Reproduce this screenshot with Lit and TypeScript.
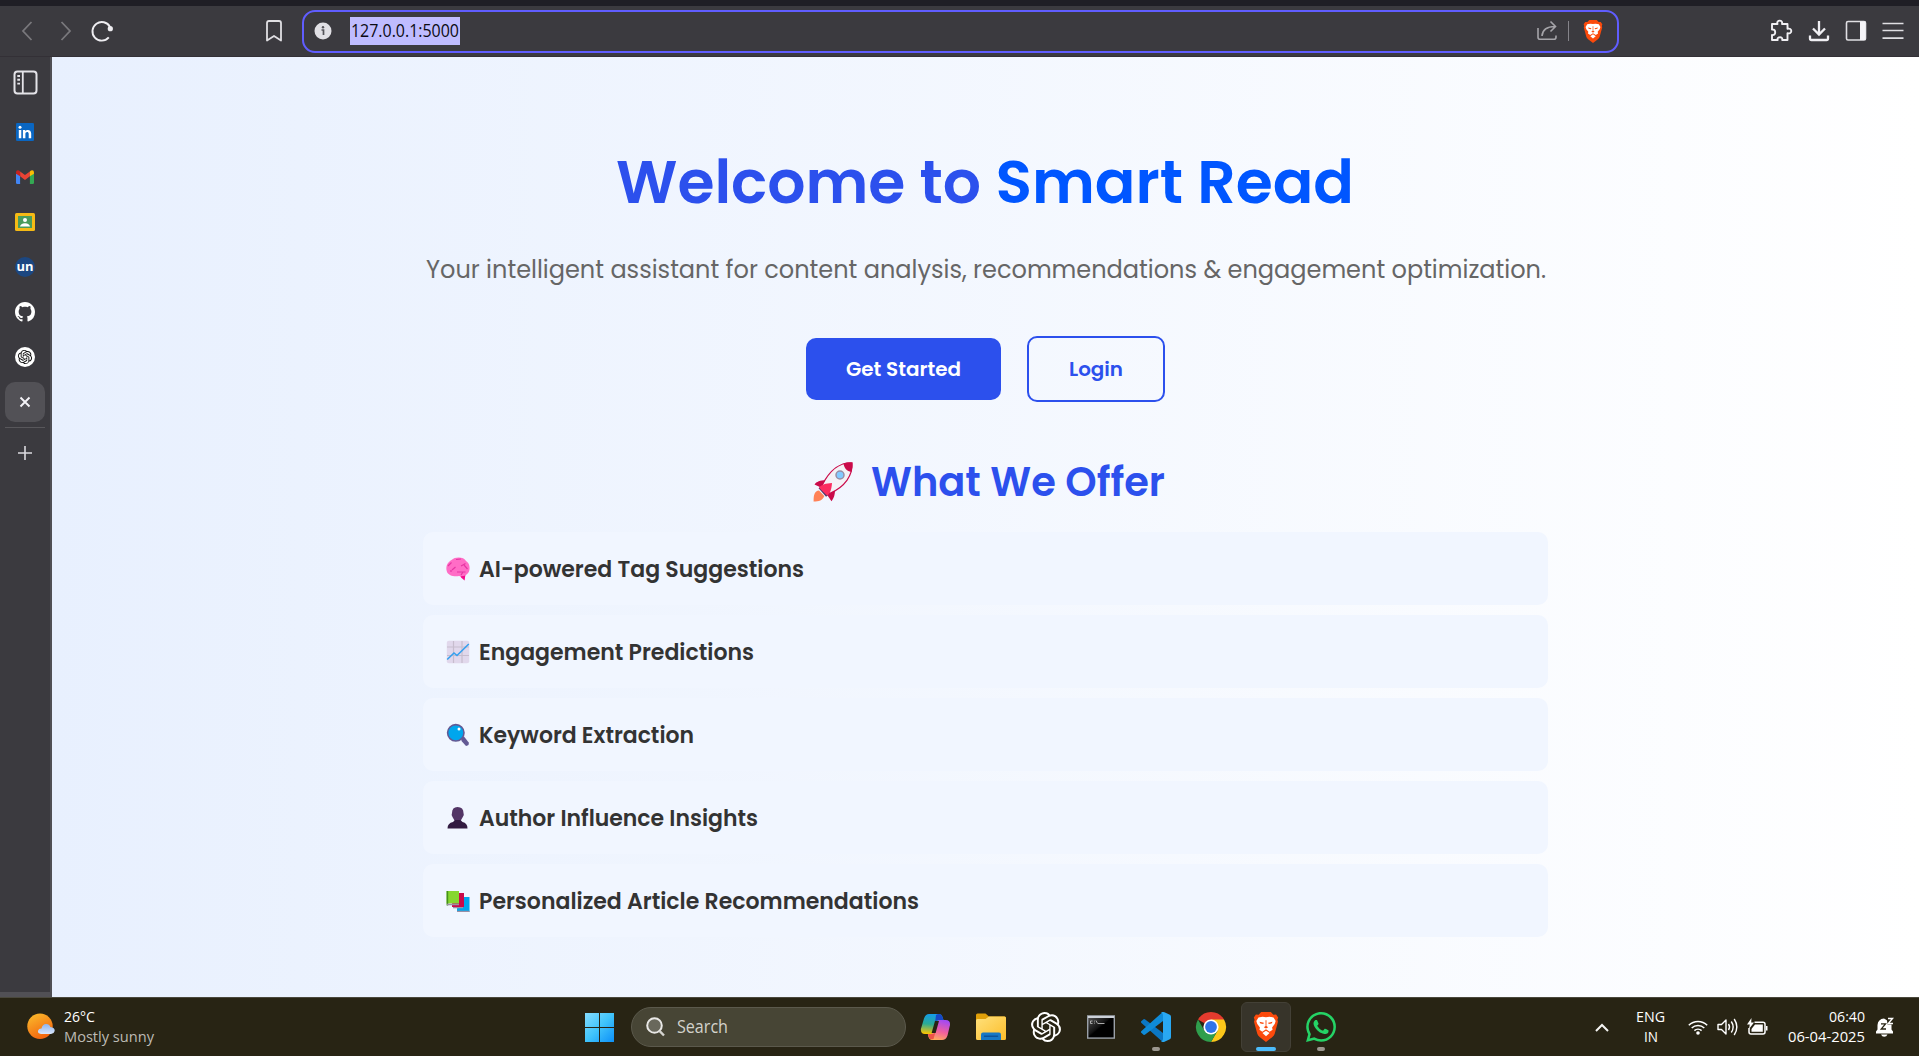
import { LitElement, html, svg, css } from "lit";
import { customElement } from "lit/decorators.js";

/** One line of text set to an exact advance width. */
const line = (text: unknown, width: number, height: number, baseline: number, cls: string) => html`
  <svg class="line ${cls}" width=${width} height=${height}>
    <text x="0" y=${baseline} textLength=${width} lengthAdjust="spacingAndGlyphs">${text}</text>
  </svg>`;

const icon = (w: number, h: number, box: string, body: unknown) => html`
  <svg class="icon" width=${w} height=${h} viewBox=${box} fill="none">${body}</svg>`;

const OPENAI = "M22.2819 9.8211a5.9847 5.9847 0 0 0-.5157-4.9108 6.0462 6.0462 0 0 0-6.5098-2.9A6.0651 6.0651 0 0 0 4.9807 4.1818a5.9847 5.9847 0 0 0-3.9977 2.9 6.0462 6.0462 0 0 0 .7427 7.0966 5.98 5.98 0 0 0 .511 4.9107 6.051 6.051 0 0 0 6.5146 2.9001A5.9847 5.9847 0 0 0 13.2599 24a6.0557 6.0557 0 0 0 5.7718-4.2058 5.9894 5.9894 0 0 0 3.9977-2.9001 6.0557 6.0557 0 0 0-.7475-7.0729zm-9.022 12.6081a4.4755 4.4755 0 0 1-2.8764-1.0408l.1419-.0804 4.7783-2.7582a.7948.7948 0 0 0 .3927-.6813v-6.7369l2.02 1.1686a.071.071 0 0 1 .038.052v5.5826a4.504 4.504 0 0 1-4.4945 4.4944zm-9.6607-4.1254a4.4708 4.4708 0 0 1-.5346-3.0137l.142.0852 4.783 2.7582a.7712.7712 0 0 0 .7806 0l5.8428-3.3685v2.3324a.0804.0804 0 0 1-.0332.0615L9.74 19.9502a4.4992 4.4992 0 0 1-6.1408-1.6464zM2.3408 7.8956a4.485 4.485 0 0 1 2.3655-1.9728V11.6a.7664.7664 0 0 0 .3879.6765l5.8144 3.3543-2.0201 1.1685a.0757.0757 0 0 1-.071 0l-4.8303-2.7865A4.504 4.504 0 0 1 2.3408 7.872zm16.5963 3.8558L13.1038 8.364 15.1192 7.2a.0757.0757 0 0 1 .071 0l4.8303 2.7913a4.4944 4.4944 0 0 1-.6765 8.1042v-5.6772a.79.79 0 0 0-.407-.667zm2.0107-3.0231l-.142-.0852-4.7735-2.7818a.7759.7759 0 0 0-.7854 0L9.409 9.2297V6.8974a.0662.0662 0 0 1 .0284-.0615l4.8303-2.7866a4.4992 4.4992 0 0 1 6.6802 4.66zM8.3065 12.863l-2.02-1.1638a.0804.0804 0 0 1-.038-.0567V6.0742a4.4992 4.4992 0 0 1 7.3757-3.4537l-.142.0805L8.704 5.459a.7948.7948 0 0 0-.3927.6813zm1.0976-2.3654l2.602-1.4998 2.6069 1.4998v2.9994l-2.5974 1.4997-2.6067-1.4997Z";
const GITHUB = "M8 0C3.58 0 0 3.58 0 8c0 3.54 2.29 6.53 5.47 7.59.4.07.55-.17.55-.38 0-.19-.01-.82-.01-1.49-2.01.37-2.53-.49-2.69-.94-.09-.23-.48-.94-.82-1.13-.28-.15-.68-.52-.01-.53.63-.01 1.08.58 1.23.82.72 1.21 1.87.87 2.33.66.07-.52.28-.87.51-1.07-1.78-.2-3.64-.89-3.64-3.95 0-.87.31-1.59.82-2.15-.08-.2-.36-1.02.08-2.12 0 0 .67-.21 2.2.82.64-.18 1.32-.27 2-.27s1.36.09 2 .27c1.53-1.04 2.2-.82 2.2-.82.44 1.1.16 1.92.08 2.12.51.56.82 1.27.82 2.15 0 3.07-1.87 3.75-3.65 3.95.29.25.54.73.54 1.48 0 1.07-.01 1.93-.01 2.2 0 .21.15.46.55.38A8.01 8.01 0 0 0 16 8c0-4.42-3.58-8-8-8z";
const WHATSAPP = "M17.472 14.382c-.297-.149-1.758-.867-2.03-.967-.273-.099-.471-.148-.67.15-.197.297-.767.966-.94 1.164-.173.199-.347.223-.644.075-.297-.15-1.255-.463-2.39-1.475-.883-.788-1.48-1.761-1.653-2.059-.173-.297-.018-.458.13-.606.134-.133.298-.347.446-.52.149-.174.198-.298.298-.497.099-.198.05-.371-.025-.52-.075-.149-.669-1.612-.916-2.207-.242-.579-.487-.5-.669-.51-.173-.008-.371-.01-.57-.01-.198 0-.52.074-.792.372-.272.297-1.04 1.016-1.04 2.479 0 1.462 1.065 2.875 1.213 3.074.149.198 2.096 3.2 5.077 4.487.709.306 1.262.489 1.694.625.712.227 1.36.195 1.871.118.571-.085 1.758-.719 2.006-1.413.248-.694.248-1.289.173-1.413-.074-.124-.272-.198-.57-.347m-5.421 7.403h-.004a9.87 9.87 0 01-5.031-1.378l-.361-.214-3.741.982.998-3.648-.235-.374a9.86 9.86 0 01-1.51-5.26c.001-5.45 4.436-9.884 9.888-9.884 2.64 0 5.122 1.03 6.988 2.898a9.825 9.825 0 012.893 6.994c-.003 5.45-4.437 9.884-9.885 9.884m8.413-18.297A11.815 11.815 0 0012.05 0C5.495 0 .16 5.335.157 11.892c0 2.096.547 4.142 1.588 5.945L.057 24l6.305-1.654a11.882 11.882 0 005.683 1.448h.005c6.554 0 11.89-5.335 11.893-11.893a11.821 11.821 0 00-3.48-8.413Z";

/* Lion shield on a 26x31 box. */
const brave = (w: number, h: number) => icon(w, h, "0 0 26 31", svg`
  <path d="M8 0H18L20.6 2.8 23.4 2.6 25.6 5.6 24.8 8 25.4 10 22 22.6Q21.4 24.6 19.6 25.9L13 31 6.4 25.9Q4.600 24.600 4 22.600L.6 10 1.200 8 .4 5.600 2.600 2.600 5.400 2.800Z" fill="#fb4a0c"/>
  <path d="M13 5.500 16.600 4.900 20.800 5.800 23 9.300 22 12.500 19.300 15.900 19.800 18.300 16.800 20.300 13 17.900 9.200 20.300 6.200 18.300 6.700 15.900 4 12.500 3 9.300 5.200 5.800 9.400 4.900Z" fill="#fff"/>
  <path d="M13 19.300 16.700 21.800 13 25 9.300 21.800Z" fill="#fff"/>
  <path d="M6.200 10.200 10.800 11 10.200 12.400 7.200 11.900ZM19.800 10.200 15.200 11 15.800 12.400 18.800 11.900ZM12.500 8.500H13.500L13.400 14.500 15.300 15.800 13 17 10.700 15.800 12.600 14.500Z" fill="#fb4a0c"/>`);

const I = {
  back: icon(12, 22, "0 0 12 22", svg`<path d="M10.500 2 2 11 10.500 20" stroke="#79787c" stroke-width="1.800"/>`),
  forward: icon(12, 22, "0 0 12 22", svg`<path d="M1.500 2 10 11 1.500 20" stroke="#79787c" stroke-width="1.800"/>`),
  reload: icon(24, 24, "0 0 24 24", svg`<path d="M18.800 18.400A9.300 9.300 0 1 1 20 8" stroke="#eeedf1" stroke-width="1.900"/><circle cx="20.300" cy="9.700" r="2.600" fill="#eeedf1"/>`),
  bookmark: icon(18, 24, "0 0 18 24", svg`<path d="M2 4Q2 2 4 2H14Q16 2 16 4V21.500L9 17 2 21.500Z" stroke="#e0dfe3" stroke-width="1.800" stroke-linejoin="round"/>`),
  info: icon(18, 18, "0 0 18 18", svg`<circle cx="9" cy="9" r="8.500" fill="#e1e0e5"/><path d="M7.500 8H9.500V13" stroke="#55545a" stroke-width="1.700"/><circle cx="9" cy="5.200" r="1.200" fill="#55545a"/>`),
  share: icon(22, 22, "0 0 22 22", svg`<path d="M2 8V17.300Q2 19.300 4 19.300H18Q20 19.300 20 17.300V15.500M6 16C6.500 9.500 10.500 6.500 19 6.500M14.500 1.500 19.500 6.500 14.500 11.500" stroke="#a5a4a9" stroke-width="1.600"/>`),
  puzzle: icon(24, 24, "0 0 24 24", svg`<path d="M3 5H8.500C7.800 2.800 9 1.600 10.700 1.600S13.600 2.800 13 5H18.500V9.800C20.800 9.200 22.300 10.300 22.300 12S20.800 14.800 18.500 14.200V21H13.200C13.700 19 12.400 18.200 11 18.200S8 19 8.700 21H3V16C5 16.400 6.200 15.200 6.200 13.300S5 10 3 10.600Z" stroke="#f0eff3" stroke-width="1.900" stroke-linejoin="round"/>`),
  download: icon(22, 22, "0 0 22 22", svg`<path d="M11 1V14M5 8.500 11 14.500 17 8.500M2 15.500V18.500Q2 20 3.500 20H18.500Q20 20 20 18.500V15.500" stroke="#f0eff3" stroke-width="2.300"/>`),
  panel: icon(22, 22, "0 0 22 22", svg`<rect x="1.500" y="1.500" width="19" height="18.500" rx="1.500" stroke="#e0dfe3" stroke-width="1.600"/><path d="M15 1.500H20.500V20H15Z" fill="#f6f5f9"/>`),
  menu: icon(22, 20, "0 0 22 20", svg`<path d="M.5 2.500H21.500M.5 9.500H21.500M.5 17.200H21.500" stroke="#e0dfe3" stroke-width="1.700"/>`),
  tabs: icon(25, 25, "0 0 25 25", svg`<rect x="1.500" y="1.500" width="22" height="22" rx="3" stroke="#e4e3e8" stroke-width="2"/><path d="M9.800 1.500V23.500" stroke="#e4e3e8" stroke-width="1.800"/><path d="M4.300 6H7M4.300 9.800H7M4.300 13.600H7" stroke="#e4e3e8" stroke-width="1.900"/>`),
  linkedin: icon(18, 18, "0 0 18 18", svg`<rect width="18" height="18" rx="1.300" fill="#0a66c2"/><path d="M2.800 7H5.300V15.200H2.800ZM6.900 7H9.300V8.200C10.500 6.300 15.200 6.200 15.200 10.500V15.200H12.700V11C12.700 8.300 9.400 8.400 9.400 11V15.200H6.900Z" fill="#fff"/><circle cx="4" cy="4.200" r="1.500" fill="#fff"/>`),
  gmail: icon(18, 14, "0 0 18 14", svg`<path d="M0 4H4.100V14H1.200Q0 14 0 12.800Z" fill="#4285f4"/><path d="M13.900 4H18V12.800Q18 14 16.800 14H13.900Z" fill="#34a853"/><path d="M4.100 1.400 9 5.100 13.900 1.400V6.200L9 10 4.100 6.200Z" fill="#ea4335"/><path d="M0 2.200Q.3-.6 3 .5L4.100 1.400V6.200L0 3.800Z" fill="#c5221f"/><path d="M18 2.200Q17.700-.6 15 .5L13.900 1.400V6.200L18 3.800Z" fill="#fbbc04"/>`),
  classroom: icon(20, 18, "0 0 20 18", svg`<rect width="20" height="18" rx="1.500" fill="#f5ba15"/><rect x="3" y="3" width="14" height="12" fill="#4a9c5c"/><circle cx="10" cy="7" r="2" fill="#fff"/><path d="M5 13.500Q5.500 10.500 10 10.300 14.500 10.500 15 13.500Z" fill="#fff"/>`),
  un: icon(20, 20, "0 0 20 20", svg`<circle cx="10" cy="10" r="10" fill="#1c4781"/><text class="un" x="10" y="14.200" text-anchor="middle" textLength="17" lengthAdjust="spacingAndGlyphs">un</text>`),
  github: icon(20, 20, "0 0 16 16", svg`<path d=${GITHUB} fill="#fff"/>`),
  chatTab: icon(20, 20, "0 0 20 20", svg`<circle cx="10" cy="10" r="10" fill="#fff"/><g transform="translate(2.900 2.900) scale(.592)"><path d=${OPENAI} fill="#111"/></g>`),
  close: icon(12, 12, "0 0 12 12", svg`<path d="M1.500 1.500 10.500 10.500M10.500 1.500 1.500 10.500" stroke="#f4f3f7" stroke-width="1.900"/>`),
  plus: icon(14, 14, "0 0 14 14", svg`<path d="M7 0V14M0 7H14" stroke="#dbdadf" stroke-width="1.600"/>`),
  rocket: icon(40, 40, "0 0 40 40", svg`
    <path d="M6 28.500C1.500 29 .5 33 .6 39.500 6 39.500 9.500 38.500 11.300 34Z" fill="#ff8257"/>
    <path d="M13 18C7 18.500 3.500 19.500 1.500 22.500L9 26ZM22 27.500C22 33 21 36 18.500 39.300L13.500 32Z" fill="#ca0b4a"/>
    <path d="M39 .8C28 0 17 7.500 9 23.500L16.500 31.500C32 25 40 13 39 .8Z" fill="#f4f2f6" stroke="#ca0b4a" stroke-width="1.200"/>
    <path d="M30.500 1.600C34 .3 36.500.3 39.300.8 39.700 4 39.200 7 38.300 10 34 9.500 31 6 30.500 1.600Z" fill="#ca0b4a"/>
    <path d="M6.500 25.500 14 34" stroke="#51386c" stroke-width="2.500"/>
    <path d="M19 21C13 21.500 8 22.500 6 25.800L14 33.500C17.500 31.500 18.500 27 19 21Z" fill="#fb2c5f"/>
    <circle cx="27" cy="13" r="4" fill="#83caff" stroke="#998ea5" stroke-width="1.500"/>`),
  brain: icon(24, 24, "0 0 24 24", svg`
    <path d="M14 18.500 19.500 17 18.600 23.500 15.300 20.800Z" fill="#f70a8d"/>
    <path d="M1 15C-1 9 2 5 5.500 3 9-.5 18-.3 20 4 23.500 6 24.500 11 22.800 15 21 18.500 17 19.800 13 19 8 20 2.500 18.500 1 15Z" fill="#ff6dc6"/>
    <path d="M2 9 5.500 5.500M10 2.500 15 2M6 13 9.500 10M11 15H19.500M17 15 15 18M15 9 19.500 6.500M18 8 21.500 12M5 15V13" stroke="#e636a4" stroke-width="1.200"/>`),
  chart: icon(24, 24, "0 0 24 24", svg`<rect x=".8" y=".8" width="22.400" height="22.400" rx="2" fill="#e1d8ec"/><path d="M7.500 1V23M16 1V23M1 7H23M1 15.500H23" stroke="#c7bdce" stroke-width="1.200"/><path d="M1.200 19.500 8 13 11 15.500 22.800 4" stroke="#35a0ee" stroke-width="1.600"/>`),
  magnifier: icon(24, 24, "0 0 24 24", svg`<path d="M15 14.500 18 13.500 22.700 19.500Q23.500 22.500 20 23L15.500 18Z" fill="#635994"/><circle cx="9.800" cy="9.800" r="8.200" fill="#00a6ed" stroke="#635994" stroke-width="1.600"/><circle cx="13" cy="6" r="1.500" fill="#fff"/>`),
  bust: icon(24, 24, "0 0 24 24", svg`<path d="M6 7Q6 1 11.500 1 17.500 1 17.500 7 18.500 9 16.800 11L14.500 15H8.800L6.500 11Q5 9 6 7Z" fill="#533566"/><path d="M1.500 22.500Q1.500 17 7 16L9 14H14.500L16.500 16Q21.500 17 21.500 22.500Z" fill="#321b41"/>`),
  books: icon(24, 24, "0 0 24 24", svg`<path d="M13 8H23.500V23H11V20Z" fill="#00a6ed"/><path d="M11 22.300H23.500M7 18.700H17" stroke="#9b8fa5" stroke-width="1.300"/><path d="M8 4H18V18H6V15Z" fill="#ca0b4a"/><path d="M.6 2H13V14.500H.6Z" fill="#86d72f"/><path d="M.6 2H2.200V16.500H.6Z" fill="#44911b"/><path d="M1 15.500H13" stroke="#9b8fa5" stroke-width="1.500"/>`),
  weather: icon(28, 28, "0 0 28 28", svg`<defs><linearGradient id="sun" x1="0" y1="0" x2=".5" y2="1"><stop stop-color="#fbc02d"/><stop offset="1" stop-color="#f2660f"/></linearGradient><linearGradient id="cloud" x1="0" y1="0" x2="0" y2="1"><stop stop-color="#8eb4ee"/><stop offset="1" stop-color="#d9e6fb"/></linearGradient></defs><circle cx="13" cy="13.200" r="12.700" fill="url(#sun)"/><path d="M14 21Q10.500 20.500 11 17.800 11.700 15.300 14.500 15.500 15.500 10.800 19.300 11 22.500 11 23.300 14 28 14.500 27.700 18 27 20.800 24 21Z" fill="url(#cloud)"/>`),
  start: icon(29, 29, "0 0 29 29", svg`<defs><linearGradient id="win" gradientUnits="userSpaceOnUse" x1="0" y1="0" x2="29" y2="29"><stop stop-color="#85dcff"/><stop offset=".5" stop-color="#40c4fb"/><stop offset="1" stop-color="#0d90f8"/></linearGradient></defs><path d="M0 0H14V14H0ZM15 0H29V14H15ZM0 15H14V29H0ZM15 15H29V29H15Z" fill="url(#win)"/>`),
  search: icon(19, 20, "0 0 19 20", svg`<circle cx="8.500" cy="8.500" r="7.300" fill="#69685c" stroke="#e9e8e6" stroke-width="2"/><path d="M13.500 13.800 18 18.500" stroke="#d5d4d0" stroke-width="2.400"/>`),
  copilot: icon(29, 26, "0 0 29 26", svg`<defs><linearGradient id="ca" x1=".4" y1="0" x2=".3" y2="1"><stop stop-color="#149be8"/><stop offset=".5" stop-color="#2aab95"/><stop offset="1" stop-color="#ffc500"/></linearGradient><linearGradient id="cb" x1=".6" y1="0" x2=".3" y2="1"><stop stop-color="#a54af1"/><stop offset=".55" stop-color="#f2609d"/><stop offset="1" stop-color="#ffae5a"/></linearGradient></defs>
    <path d="M8 0H18Q20.500 0 21.500 3L22.500 6H18L12 20H4Q-.5 20-.1 15L3 4.500Q4.500 0 8 0Z" fill="url(#ca)"/><path d="M15 1Q16 0 18 0 20.500 0 21.500 3L22.500 6H18Q15 6 14 9Z" fill="#1746c6"/>
    <path d="M21 26H11Q8.500 26 7.500 23L6.800 20H11L17.500 6H24.500Q29.500 6 29 11L26.500 21.500Q25 26 21 26Z" fill="url(#cb)"/><path d="M7 20H11.500Q14 20 15 16L12.500 25Q8.500 26 7.500 22.500Z" fill="#ee5348"/><path d="M14 7H18L14.600 19H10.600Z" fill="#282414"/>`),
  folder: icon(30, 28, "0 0 30 28", svg`<defs><linearGradient id="fo" x1="0" y1="0" x2="1" y2="1"><stop stop-color="#ffe17c"/><stop offset="1" stop-color="#fcbd2a"/></linearGradient></defs><path d="M0 2Q0 .5 1.500.5H9.500L13 3.500H28.500Q30 3.500 30 5V12H0Z" fill="#e0a009"/><path d="M0 7.500Q0 6 1.500 6H9.500L13 3.500H28.500Q30 3.500 30 5V25.500Q30 27 28.500 27H1.500Q0 27 0 25.500Z" fill="url(#fo)"/><path d="M5 27V21.500Q5 19.500 7 19.500H23Q25 19.500 25 21.500V27Z" fill="#1778c6"/><path d="M8.500 23.300H21.500" stroke="#0c529a" stroke-width="1.500" stroke-linecap="round"/>`),
  openai: icon(30, 30, "0 0 24 24", svg`<path d=${OPENAI} fill="#fff"/>`),
  terminal: icon(28, 24, "0 0 28 24", svg`<defs><linearGradient id="te" x1="0" y1="0" x2="1" y2="1"><stop stop-color="#5a5a5a"/><stop offset=".45" stop-color="#111"/><stop offset=".5" stop-color="#000"/></linearGradient></defs><rect x=".7" y=".9" width="26.600" height="22.200" fill="url(#te)" stroke="#9aa0a8" stroke-width="1.400"/><path d="M1 2H27" stroke="#ccd1d8" stroke-width="2"/><path d="M5.500 6H3.500V8.500H5.500M7.500 5.700V6.500M7.500 7.700V8.500M9 5.500 10.500 8.500M11 8.500H17.500" stroke="#bbb" stroke-width=".9"/>`),
  vscode: icon(30, 30, "0 0 30 30", svg`<path d="M0 9.500 2.500 7.300Q3.300 6.800 4.200 7.400L22 21V29.800Q21 29.500 20.300 28.800L.5 11Q-.3 10.300 0 9.500Z" fill="#0b77c4"/><path d="M0 20.500 2.500 22.700Q3.300 23.200 4.200 22.600L22 9V.2Q21 .5 20.300 1.200L.5 19Q-.3 19.700 0 20.500Z" fill="#0f8bd8"/><path d="M20 29.500Q22 28.800 22 27V3Q22 1.200 20 .5L21.800.1Q22.700-.1 23.500.3L28.800 2.800Q30 3.400 30 4.700V25.300Q30 26.600 28.800 27.200L23.500 29.700Q22.700 30.100 21.800 29.900Z" fill="#29a8f2"/>`),
  chrome: icon(30, 30, "0 0 30 30", svg`<path d="M15 15 2 7.500A15 15 0 0 1 28 7.500Z" fill="#e33b2e"/><path d="M28 7.500A15 15 0 0 1 15 30L21.500 18.700 15 7.500Z" fill="#fcc71a"/><path d="M2 7.500A15 15 0 0 0 15 30L21.500 18.800 8.600 19Z" fill="#2f9e4c"/><circle cx="15" cy="15" r="7.600" fill="#fff"/><circle cx="15" cy="15" r="5.900" fill="#2f74e8"/>`),
  brave: brave(26, 30),
  whatsapp: icon(30, 30, "0 0 24 24", svg`<path d=${WHATSAPP} fill="#25d366"/>`),
  chevron: icon(14, 9, "0 0 14 9", svg`<path d="M1 8 7 2 13 8" stroke="#f5f5f3" stroke-width="2"/>`),
  wifi: icon(20, 16, "0 0 20 16", svg`<path d="M.8 6.200A13 13 0 0 1 19.200 6.200M3.700 9A9 9 0 0 1 16.300 9M6.400 11.600A5.200 5.200 0 0 1 13.600 11.600" stroke="#fff" stroke-width="1.500"/><circle cx="10" cy="14" r="1.800" fill="#fff"/>`),
  volume: icon(21, 18, "0 0 21 18", svg`<path d="M1 6.500H4.500L9 2V16L4.500 11.500H1Z" stroke="#fff" stroke-width="1.400" stroke-linejoin="round"/><path d="M11.500 6Q13.500 9 11.500 12M14.300 3.500Q18 9 14.300 14.500M17.200 1Q22.500 9 17.200 17" stroke="#fff" stroke-width="1.400"/>`),
  battery: icon(21, 18, "0 0 21 18", svg`<path d="M7.500 4.300H16Q18 4.300 18 6.300V14Q18 16 16 16H4Q2 16 2 14V10" stroke="#fff" stroke-width="1.500"/><path d="M8 6.500H15.800V13.800H4.500V11Z" fill="#fff"/><path d="M19 8H20.500V12.500H19Z" fill="#fff"/><path d="M4.500 0 0 6.500H2.800L2 11 7 4.500H4.200Z" fill="#fff"/>`),
  bell: icon(18, 20, "0 0 18 20", svg`<path d="M0 16.500V14.500L1.500 12.500V8Q2 2 8 1.500L15.500 6V12.500L17 14.500V16.500Z" fill="#fff"/><path d="M5 17.500H11.500Q10.500 19.800 8.200 19.800 6 19.800 5 17.500Z" fill="#fff"/><path d="M5 6.800H9.500L5.200 12H10" stroke="#282414" stroke-width="1.300"/><path d="M10.500 0H18V7.500H11.500Z" fill="#282414"/><path d="M12 1.500H16.500L12.300 6.500H17" stroke="#fff" stroke-width="1.400"/>`),
};

@customElement("browser-toolbar")
class BrowserToolbar extends LitElement {
  static styles = css`
    :host { display: block; height: 57px; font-family: "Open Sans", "Noto Sans", sans-serif; }
    .strip { height: 6px; background: #1f1e25; }
    .bar { display: flex; align-items: center; height: 51px; box-sizing: border-box; padding: 0 15.500px 0 21px; background: #3b3a3f; border-bottom: 1px solid #333036; }
    .icon, .line { display: block; flex: none; overflow: visible; }
    .nav { display: flex; align-items: center; width: 243.500px; }
    .nav > :nth-child(2) { margin-left: 27px; }
    .nav > :nth-child(3) { margin-left: 18px; }
    .url { display: flex; align-items: center; box-sizing: border-box; width: 1317px; height: 43px; margin-left: 19.500px; padding: 0 14px 0 10px; border: 2px solid #605dff; border-radius: 13px; }
    .chosen { width: 110px; height: 28px; margin: 0 auto 0 18px; background: #bfbcff; display: flex; justify-content: center; }
    .address { font-size: 18px; fill: #0b0b12; }
    .rule { width: 1px; height: 20px; margin: 0 14px 0 10px; background: #85848a; }
    .tools { display: flex; align-items: center; gap: 15px; margin-left: auto; }
  `;
  render() {
    return html`
      <div class="strip"></div>
      <div class="bar">
        <div class="nav">${I.back}${I.forward}${I.reload}</div>
        ${I.bookmark}
        <div class="url">
          ${I.info}
          <div class="chosen">${line("127.0.0.1:5000", 108, 28, 20, "address")}</div>
          ${I.share}<div class="rule"></div>${brave(20, 23)}
        </div>
        <div class="tools">${I.puzzle}${I.download}${I.panel}${I.menu}</div>
      </div>`;
  }
}

@customElement("tab-rail")
class TabRail extends LitElement {
  static styles = css`
    :host { display: flex; flex-direction: column; align-items: center; box-sizing: border-box; width: 52px; padding-top: 13px; background: #3b3a3f; border-right: 2px solid #504f54; border-bottom: 5px solid #515055; }
    .icon { display: block; flex: none; }
    .cell { display: flex; align-items: center; justify-content: center; width: 40px; height: 40px; margin-bottom: 5px; border-radius: 10px; }
    .head { display: flex; height: 42px; }
    .current { background: #525156; }
    .rule { width: 40px; height: 1px; background: #58575b; }
    .add { display: flex; margin-top: 18px; }
    .un { font: 700 13px "Open Sans", sans-serif; fill: #fff; }
  `;
  render() {
    const tabs = [I.linkedin, I.gmail, I.classroom, I.un, I.github, I.chatTab];
    return html`
      <div class="head">${I.tabs}</div>
      ${tabs.map((t) => html`<div class="cell">${t}</div>`)}
      <div class="cell current">${I.close}</div>
      <div class="rule"></div>
      <div class="add">${I.plus}</div>`;
  }
}

@customElement("landing-page")
class LandingPage extends LitElement {
  static styles = css`
    :host { display: flex; flex-direction: column; align-items: center; flex: 1; box-sizing: border-box; padding-top: 90px; background: linear-gradient(to right, #e8f0fe, #ffffff); font-family: Poppins, Inter, "Open Sans", sans-serif; }
    .icon, .line { display: block; flex: none; overflow: visible; }
    h1, h2, p, ul { margin: 0; padding: 0; }
    h1 { padding-right: 2px; }
    .title { font-size: 60px; font-weight: 600; fill: #2c50ed; }
    .brand { fill: #0056ff; }
    .lead { margin-top: 31px; }
    .subtitle { font-size: 25px; fill: #666; }
    .actions { display: flex; align-items: center; gap: 26px; margin-top: 38px; }
    .button { display: flex; align-items: center; justify-content: center; box-sizing: border-box; width: 195px; height: 62px; border-radius: 10px; background: #2c50ed; }
    .outline { width: 138px; height: 66px; background: none; border: 2px solid #2c50ed; }
    .label { font-size: 20px; font-weight: 600; fill: #fff; }
    .outline .label { fill: #2c50ed; }
    .offer { display: flex; align-items: center; gap: 18px; margin-top: 53px; padding-left: 6px; }
    .section { font-size: 40px; font-weight: 600; fill: #2c50ed; }
    .features { display: flex; flex-direction: column; gap: 10px; width: 1125px; margin-top: 23px; list-style: none; }
    .feature { display: flex; align-items: center; gap: 9px; box-sizing: border-box; height: 73px; padding-left: 23px; border-radius: 10px; background: #f1f6ff; }
    .name { font-size: 22px; font-weight: 600; fill: #333; }
  `;
  render() {
    const features: [unknown, string, number][] = [
      [I.brain, "AI-powered Tag Suggestions", 325],
      [I.chart, "Engagement Predictions", 275],
      [I.magnifier, "Keyword Extraction", 215],
      [I.bust, "Author Influence Insights", 279],
      [I.books, "Personalized Article Recommendations", 440],
    ];
    return html`
      <h1>${line(svg`Welcome to <tspan class="brand">Smart Read</tspan>`, 738, 70, 56, "title")}</h1>
      <p class="lead">${line("Your intelligent assistant for content analysis, recommendations & engagement optimization.", 1120, 50, 29.5, "subtitle")}</p>
      <div class="actions">
        <div class="button">${line("Get Started", 115, 24, 19, "label")}</div>
        <div class="button outline">${line("Login", 54, 24, 19, "label")}</div>
      </div>
      <h2 class="offer">${I.rocket}${line("What We Offer", 294, 54, 41, "section")}</h2>
      <ul class="features">
        ${features.map(([i, name, w]) => html`<li class="feature">${i}${line(name, w, 28, 21.5, "name")}</li>`)}
      </ul>`;
  }
}

@customElement("task-bar")
class TaskBar extends LitElement {
  static styles = css`
    :host { display: flex; align-items: center; box-sizing: border-box; height: 59px; padding: 0 25px 0 27px; background: #282414; border-top: 1px solid #4a483c; font-family: "Open Sans", "Noto Sans", sans-serif; font-size: 14.500px; }
    .icon, .line { display: block; flex: none; overflow: visible; }
    .line { fill: #fff; }
    .weather { display: flex; align-items: center; gap: 9px; width: 558px; }
    .stack { display: flex; flex-direction: column; }
    .muted { fill: #bdbbb4; }
    .search { display: flex; align-items: center; box-sizing: border-box; gap: 12px; width: 275px; height: 40px; margin: 0 2px 0 17px; padding-left: 14px; border-radius: 20px; background: #474535; border: 1px solid #5b594c; }
    .search .line { font-size: 18px; fill: #d3d2cc; }
    .cell { display: flex; flex-direction: column; align-items: center; justify-content: center; box-sizing: border-box; position: relative; width: 50px; height: 50px; margin: 0 2.500px; border: 1px solid transparent; border-radius: 6px; }
    .active { background: #37342a; border-color: #434036; }
    .mark { position: absolute; bottom: 0; width: 8px; height: 4px; border-radius: 2px; background: #9b978f; }
    .active .mark { width: 20px; background: #4cbcfb; }
    .tray { display: flex; align-items: center; margin-left: auto; }
    .center { align-items: center; margin: 0 23px 0 27px; }
    .status { display: flex; align-items: center; gap: 9px; margin-right: 20px; }
    .end { align-items: flex-end; margin-right: 11px; }
  `;
  render() {
    const apps: [unknown, string][] = [
      [I.copilot, ""], [I.folder, ""], [I.openai, ""], [I.terminal, ""],
      [I.vscode, "open"], [I.chrome, ""], [I.brave, "active"], [I.whatsapp, "open"],
    ];
    return html`
      <div class="weather">${I.weather}
        <div class="stack">${line("26°C", 31, 20, 15, "")}${line("Mostly sunny", 90, 20, 15, "muted")}</div>
      </div>
      ${I.start}
      <div class="search">${I.search}${line("Search", 51, 24, 18, "")}</div>
      ${apps.map(([i, state]) => html`<div class="cell ${state}">${i}${state ? html`<div class="mark"></div>` : ""}</div>`)}
      <div class="tray">
        ${I.chevron}
        <div class="stack center">${line("ENG", 29, 20, 15, "")}${line("IN", 14, 20, 15, "")}</div>
        <div class="status">${I.wifi}${I.volume}${I.battery}</div>
        <div class="stack end">${line("06:40", 36, 20, 15, "")}${line("06-04-2025", 77, 20, 15, "")}</div>
        ${I.bell}
      </div>`;
  }
}

@customElement("app-root")
class AppRoot extends LitElement {
  static styles = css`
    :host { display: flex; flex-direction: column; width: 1919px; height: 1056px; overflow: hidden; }
    .view { display: flex; flex: 1; min-height: 0; }
  `;
  render() {
    return html`
      <browser-toolbar></browser-toolbar>
      <div class="view"><tab-rail></tab-rail><landing-page></landing-page></div>
      <task-bar></task-bar>`;
  }
}
